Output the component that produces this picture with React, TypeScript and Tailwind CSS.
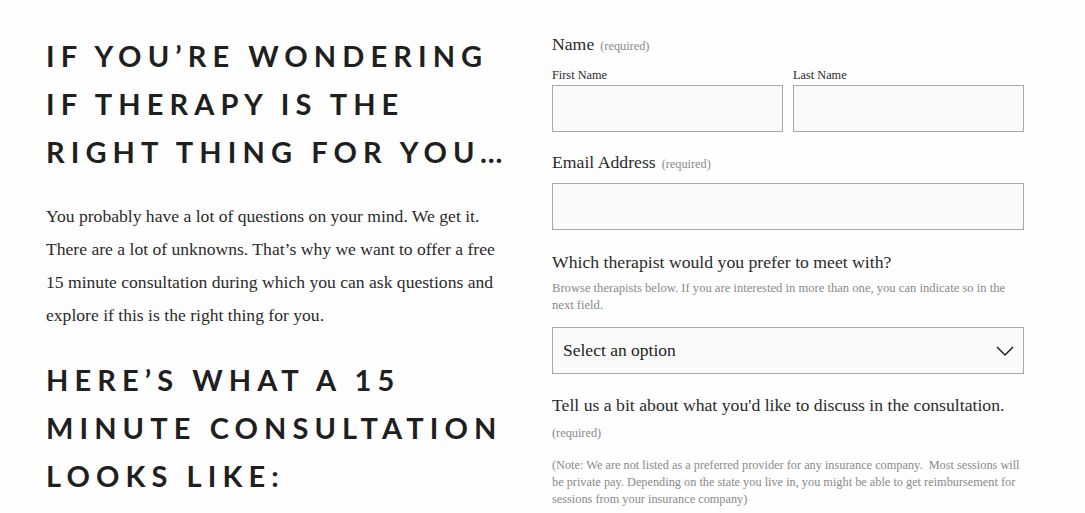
const serif = { fontFamily: '"Liberation Serif", "DejaVu Serif", serif' };

function Heading({ children }: { children: React.ReactNode }) {
    return (
        <h2
            className="text-[29px] font-bold uppercase leading-[48px] tracking-[0.21em] text-[#1f1f1f]"
            style={{ fontFamily: 'Lato, "Open Sans", sans-serif' }}
        >
            {children}
        </h2>
    );
}

function Required({ className = '' }: { className?: string }) {
    return <span className={`text-[12.3px] text-[#8a8a8a] ${className}`}>(required)</span>;
}

function TextInput() {
    return <input type="text" className="h-[47px] w-full border border-[#a9a9a9] bg-[#fafafa] px-3 outline-none" />;
}

export default function App() {
    return (
        <div className="min-h-screen bg-[#fefefe]" style={serif}>
            <div className="flex gap-[30px] px-[46px] pt-[32px]">
                {/* Left column */}
                <div className="w-[476px] shrink-0">
                    <Heading>
                        If you’re wondering if therapy is the right thing for you…
                    </Heading>
                    <p className="mt-[24px] w-[465px] text-[17.6px] leading-[33px] text-[#2a2a2a]">
                        You probably have a lot of questions on your mind. We get it. There are a lot of unknowns.
                        That’s why we want to offer a free 15 minute consultation during which you can ask questions
                        and explore if this is the right thing for you.
                    </p>
                    <div className="mt-[24px]">
                        <Heading>Here’s what a 15 minute consultation looks like:</Heading>
                    </div>
                </div>

                {/* Right column: form */}
                <form className="-mt-[2px] w-[472px] shrink-0 text-[#2a2a2a]">
                    <div className="flex items-baseline gap-[6px] text-[17.7px] leading-[28px]">
                        <span>Name</span>
                        <Required />
                    </div>
                    <div className="mt-[8px] grid grid-cols-2 gap-[10px]">
                        <label className="block">
                            <span className="block text-[12.3px] leading-[14px] text-[#2a2a2a]">First Name</span>
                            <div className="mt-[3px]">
                                <TextInput />
                            </div>
                        </label>
                        <label className="block">
                            <span className="block text-[12.3px] leading-[14px] text-[#2a2a2a]">Last Name</span>
                            <div className="mt-[3px]">
                                <TextInput />
                            </div>
                        </label>
                    </div>

                    <div className="mt-[16px] flex items-baseline gap-[6px] text-[17.7px] leading-[28px]">
                        <span>Email Address</span>
                        <Required />
                    </div>
                    <div className="mt-[5px]">
                        <TextInput />
                    </div>

                    <div className="mt-[18px] text-[17.7px] leading-[28px]">Which therapist would you prefer to meet with?</div>
                    <p className="mt-[4px] text-[12.6px] leading-[17px] text-[#8a8a8a]">
                        Browse therapists below. If you are interested in more than one, you can indicate so in the next field.
                    </p>
                    <div className="relative mt-[13px]">
                        <select
                            className="h-[47px] w-full appearance-none border border-[#a9a9a9] bg-[#fafafa] px-[10px] text-[17.5px] text-[#1f1f1f] outline-none"
                            style={serif}
                            defaultValue=""
                        >
                            <option value="">Select an option</option>
                        </select>
                        <svg
                            className="pointer-events-none absolute right-[10px] top-1/2 -translate-y-1/2"
                            width="18"
                            height="11"
                            viewBox="0 0 18 11"
                            fill="none"
                            stroke="#1f1f1f"
                            strokeWidth="1.5"
                        >
                            <polyline points="1,1.5 9,9.5 17,1.5" />
                        </svg>
                    </div>

                    <div className="mt-[17px] text-[17.7px] leading-[28px]">
                        Tell us a bit about what you'd like to discuss in the consultation.
                    </div>
                    <div className="mt-[4px] leading-[18px]">
                        <Required />
                    </div>
                    <p className="mt-[15px] text-[12.3px] leading-[17px] text-[#8a8a8a]">
                        (Note: We are not listed as a preferred provider for any insurance company.&nbsp; Most sessions will be
                        private pay. Depending on the state you live in, you might be able to get reimbursement for sessions
                        from your insurance company)
                    </p>
                </form>
            </div>
        </div>
    );
}
